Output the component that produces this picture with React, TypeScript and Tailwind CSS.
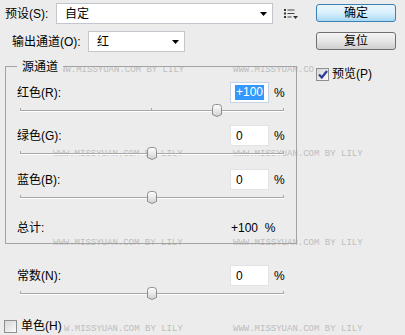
import React from 'react';

const WM = 'WWW.MISSYUAN.COM BY LILY';

function Arrow() {
  return (
    <svg width="7" height="4" viewBox="0 0 7 4">
      <path d="M0 0H7L3.5 4Z" fill="#000" />
    </svg>
  );
}

function Select({ value, width }: { value: string; width: string }) {
  return (
    <div className={`${width} h-[21px] bg-white border border-[#c3c6cc] flex items-center justify-between pl-[8px] pr-[5px]`}>
      <span>{value}</span>
      <Arrow />
    </div>
  );
}

function Check({ checked }: { checked?: boolean }) {
  return (
    <div className="w-[13px] h-[13px] border border-[#8e8f8f] bg-linear-to-br from-[#d6d6d6] to-[#fbfbfb] flex items-center justify-center shrink-0">
      {checked && (
        <svg width="10" height="9" viewBox="0 0 10 9">
          <path d="M1 4.5L3.8 7.5L9 1" fill="none" stroke="#2b3a99" strokeWidth="2.2" />
        </svg>
      )}
    </div>
  );
}

function Thumb() {
  return (
    <svg width="10" height="13" viewBox="0 0 10 13">
      <defs>
        <linearGradient id="tg" x1="0" y1="0" x2="0" y2="1">
          <stop offset="0" stopColor="#ffffff" />
          <stop offset="1" stopColor="#d2d2d2" />
        </linearGradient>
      </defs>
      <path d="M0.5 3.5Q0.5 0.5 3.5 0.5H6.5Q9.5 0.5 9.5 3.5V10.5L5 12.5L0.5 10.5Z" fill="url(#tg)" stroke="#8c8c8c" />
    </svg>
  );
}

function Slider({ value, mid }: { value: number; mid?: boolean }) {
  const pos = ((value + 200) / 400) * 263;
  return (
    <div className="ml-[14px] w-[264px] h-[16px] relative">
      <div className="absolute left-0 right-0 top-[7px] h-[1px] bg-[#a8a8a8]" />
      <div className="absolute left-0 right-0 top-[8px] h-[1px] bg-white" />
      <div className="absolute left-0 top-[5px] w-[1px] h-[3px] bg-[#a8a8a8]" />
      <div className="absolute right-0 top-[5px] w-[1px] h-[3px] bg-[#a8a8a8]" />
      {mid && <div className="absolute left-[131px] top-[5px] w-[1px] h-[3px] bg-[#a8a8a8]" />}
      <div className="absolute top-[1px]" style={{ left: pos - 5 }}>
        <Thumb />
      </div>
    </div>
  );
}

function Channel({ label, value, selected, mid }: { label: string; value: number; selected?: boolean; mid?: boolean }) {
  const text = value > 0 ? `+${value}` : `${value}`;
  return (
    <div>
      <div className="h-[21px] flex items-center">
        <span className="pl-[11px] w-[224px]">{label}</span>
        <div className={`w-[39px] h-[21px] bg-white border flex items-center ${selected ? 'border-[#c5d3e6] pl-[4px]' : 'border-[#e3e3e3] pl-[5px]'}`}>
          {selected ? <span className="bg-[#3399ff] text-white px-[1px] leading-[15px]">{text}</span> : <span>{text}</span>}
        </div>
        <span className="ml-[5px]">%</span>
      </div>
      <Slider value={value} mid={mid} />
    </div>
  );
}

function Watermark({ x, y, text = WM }: { x: number; y: number; text?: string }) {
  return (
    <span
      className="absolute font-['Liberation_Mono',monospace] text-[9px] leading-[9px] text-[#bdbdbd] whitespace-nowrap pointer-events-none"
      style={{ left: x, top: y }}
    >
      {text}
    </span>
  );
}

export default function App() {
  return (
    <div className="w-[405px] h-[335px] bg-[#ececec] relative flex text-[12px] text-black font-['Liberation_Sans','Noto_Sans_CJK_SC',sans-serif] overflow-hidden">
      <Watermark x={60} y={66} text="WW.MISSYUAN.COM BY LILY" />
      <Watermark x={233} y={66} text="WWW.MISSYUAN.CO" />
      <Watermark x={53} y={150} />
      <Watermark x={233} y={150} />
      <Watermark x={53} y={239} />
      <Watermark x={233} y={239} />
      <Watermark x={64} y={325} text="W.MISSYUAN.COM BY LILY" />
      <Watermark x={233} y={325} />

      <div className="w-[310px] flex flex-col">
        <div className="mt-[3px] h-[21px] flex items-center">
          <span className="pl-[5px] w-[56px]">预设(S):</span>
          <Select value="自定" width="w-[217px]" />
          <svg className="ml-[11px]" width="14" height="10" viewBox="0 0 14 10">
            <rect x="0" y="0" width="2" height="2" fill="#333" />
            <rect x="0" y="3.5" width="2" height="2" fill="#333" />
            <rect x="0" y="7" width="2" height="2" fill="#333" />
            <rect x="3.5" y="0.5" width="7" height="1" fill="#444" />
            <rect x="3.5" y="4" width="7" height="1" fill="#444" />
            <rect x="3.5" y="7.5" width="4" height="1" fill="#444" />
            <path d="M9 7H14L11.5 10Z" fill="#333" />
          </svg>
        </div>

        <div className="mt-[7px] h-[21px] flex items-center">
          <span className="pl-[12px] w-[88px]">输出通道(O):</span>
          <Select value="红" width="w-[97px]" />
        </div>

        <div className="mt-[14px] ml-[5px] w-[292px] h-[178px] border border-[#a3a3a3] relative pt-[15px]">
          <span className="absolute left-[11px] -top-[9px] px-[5px] bg-[#ececec]">源通道</span>
          <Channel label="红色(R):" value={100} selected mid />
          <div className="mt-[6px]">
            <Channel label="绿色(G):" value={0} />
          </div>
          <div className="mt-[7px]">
            <Channel label="蓝色(B):" value={0} />
          </div>
          <div className="mt-[14px] h-[16px] flex items-center">
            <span className="pl-[11px] w-[225px]">总计:</span>
            <span>+100&nbsp;&nbsp;%</span>
          </div>
        </div>

        <div className="mt-[21px] ml-[6px]">
          <Channel label="常数(N):" value={0} />
        </div>

        <div className="mt-[15px] pl-[4px] flex items-center">
          <Check />
          <span className="ml-[4px]">单色(H)</span>
        </div>
      </div>

      <div className="relative z-10 ml-[6px] flex flex-col">
        <button className="mt-[4px] w-[80px] h-[18px] rounded-[3px] border border-[#3c7fb1] bg-linear-to-b from-[#eaf6fd] via-[#d9f0fc] to-[#a7d9f5] flex items-center justify-center leading-none">
          确定
        </button>
        <button className="mt-[10px] w-[80px] h-[18px] rounded-[3px] border border-[#707070] bg-linear-to-b from-[#f4f4f4] via-[#e6e6e6] to-[#cfcfcf] flex items-center justify-center leading-none">
          复位
        </button>
        <div className="mt-[15px] flex items-center">
          <Check checked />
          <span className="ml-[3px]">预览(P)</span>
        </div>
      </div>
    </div>
  );
}
